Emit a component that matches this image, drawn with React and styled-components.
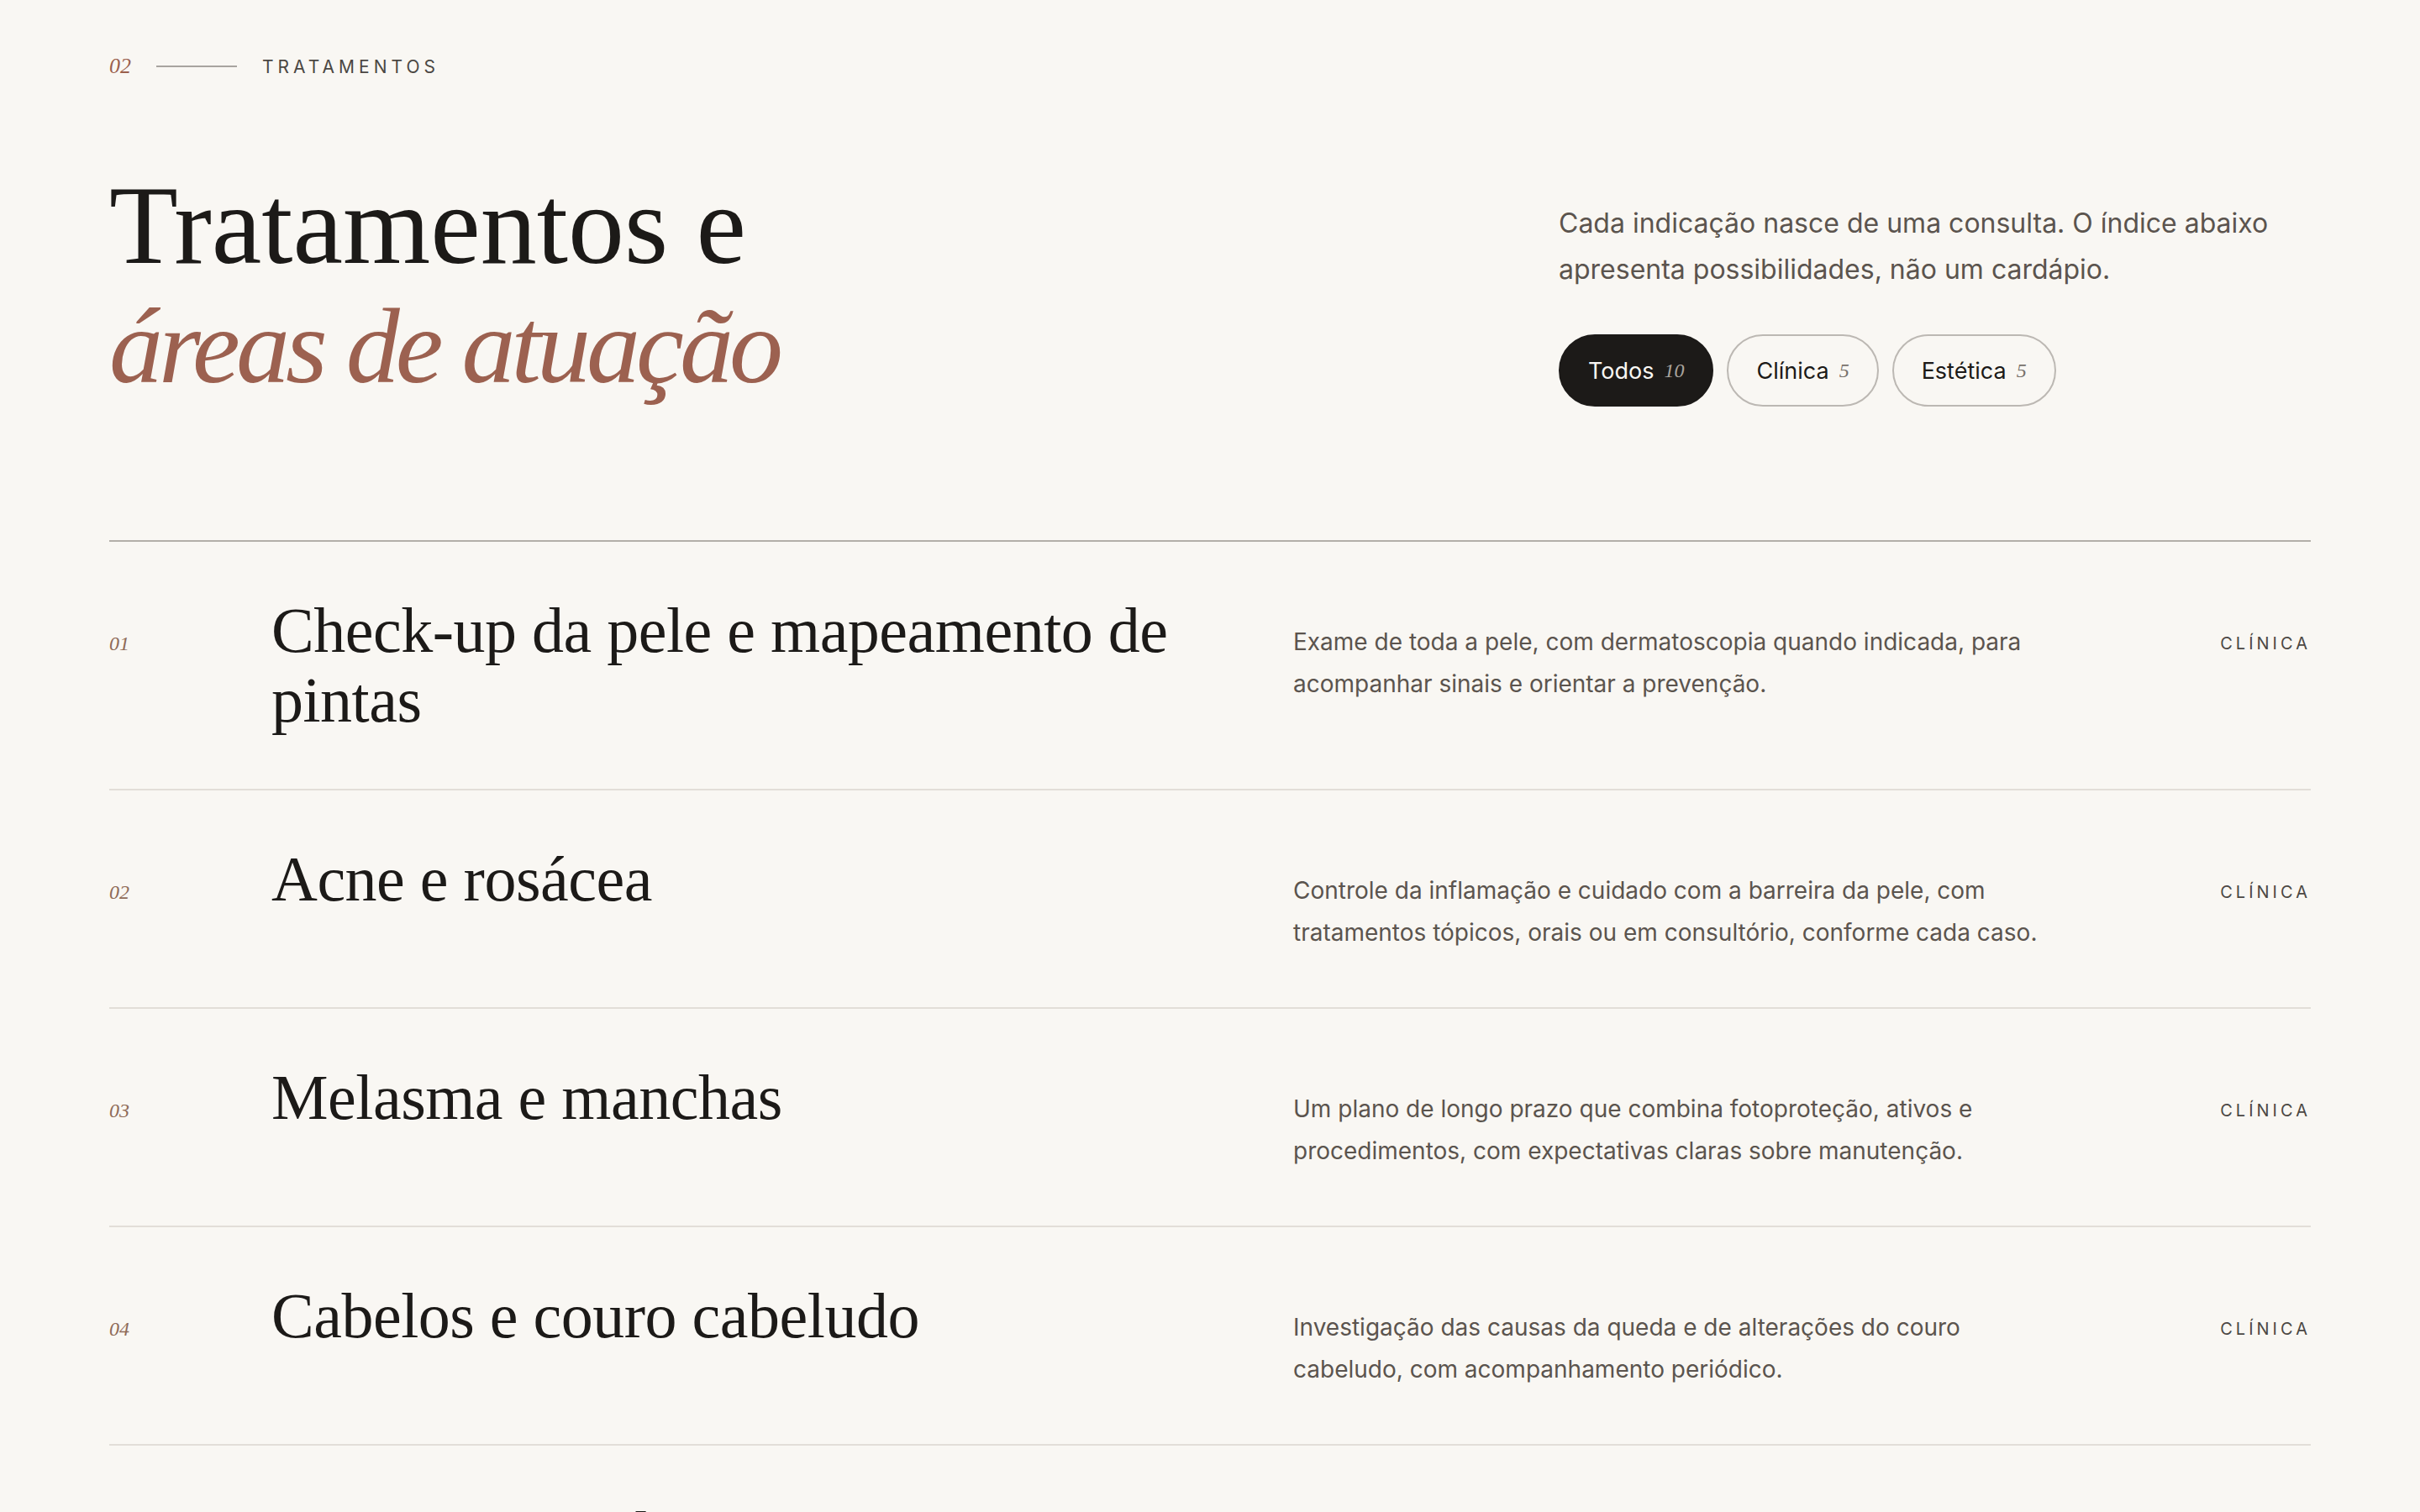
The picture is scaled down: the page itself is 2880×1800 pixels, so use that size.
import React from 'react';
import styled, { createGlobalStyle } from 'styled-components';

const serif = `"Liberation Serif", "DejaVu Serif", serif`;
const sans = `Inter, Roboto, "Liberation Sans", Arial, sans-serif`;

const GlobalStyle = createGlobalStyle`
    html, body {
        margin: 0;
        padding: 0;
        background: #f9f7f3;
    }
    * {
        box-sizing: border-box;
    }
`

const Section = styled.section`
    padding: 66px 130px 0;
    background: #f9f7f3;
    color: #1c1a18;
    font-family: ${sans};
`

const Eyebrow = styled.div`
    display: flex;
    align-items: center;
    gap: 30px;
    height: 26px;
`

const EyebrowIndex = styled.span`
    font-family: ${serif};
    font-style: italic;
    font-size: 26px;
    color: #9a5f4d;
`

const EyebrowRule = styled.span`
    width: 96px;
    height: 2px;
    background: #a8a49f;
`

const EyebrowLabel = styled.span`
    font-size: 21px;
    letter-spacing: 5px;
    color: #4b4743;
`

const Header = styled.div`
    display: grid;
    grid-template-columns: 1fr 895px;
    align-items: end;
    margin-top: 104px;
`

const Title = styled.h2`
    margin: 0;
    font-family: ${serif};
    font-weight: 400;
    font-size: 134px;
    line-height: 144px;
    color: #1c1a18;
`

const TitleLine = styled.span`
    display: block;
`

const TitleAccent = styled.span`
    display: block;
    font-style: italic;
    font-size: 128px;
    letter-spacing: -5px;
    color: #9c6150;
`

const Intro = styled.p`
    margin: 0 0 50px;
    max-width: 880px;
    font-size: 32px;
    line-height: 55px;
    color: #5b544e;
`

const Filters = styled.div`
    display: flex;
    gap: 16px;
`

const Pill = styled.button`
    display: inline-flex;
    align-items: center;
    gap: 12px;
    height: 86px;
    padding: 0 33px;
    border-radius: 43px;
    border: 2px solid ${props => props.$active ? '#1c1a18' : '#bcb8b3'};
    background: ${props => props.$active ? '#1c1a18' : 'transparent'};
    color: ${props => props.$active ? '#f9f7f3' : '#1c1a18'};
    font-family: ${sans};
    font-size: 27px;
    cursor: pointer;
`

const PillCount = styled.span`
    font-family: ${serif};
    font-style: italic;
    font-size: 24px;
    color: ${props => props.$active ? '#a9a49e' : '#77716b'};
`

const List = styled.div`
    margin-top: 159px;
    border-top: 2px solid #b3afa9;
`

const Row = styled.article`
    display: grid;
    grid-template-columns: 193px 1216px 1fr auto;
    align-items: start;
    padding: 64px 0;
    border-bottom: 2px solid #e2ded8;
`

const Index = styled.span`
    padding-top: 42px;
    font-family: ${serif};
    font-style: italic;
    font-size: 24px;
    line-height: 30px;
    color: #8f6b58;
`

const RowTitle = styled.h3`
    margin: 0;
    padding-right: 60px;
    font-family: ${serif};
    font-weight: 400;
    font-size: 76px;
    line-height: 83px;
    letter-spacing: -0.5px;
    color: #1c1a18;
`

const Description = styled.p`
    margin: 0;
    padding-top: 30px;
    max-width: 912px;
    font-size: 28px;
    line-height: 50px;
    color: #5b544e;
`

const Tag = styled.span`
    padding-top: 42px;
    font-size: 20px;
    line-height: 30px;
    letter-spacing: 4px;
    text-transform: uppercase;
    color: #4b4743;
`

const treatments = [
    { title: 'Check-up da pele e mapeamento de pintas', text: 'Exame de toda a pele, com dermatoscopia quando indicada, para acompanhar sinais e orientar a prevenção.', kind: 'Clínica' },
    { title: 'Acne e rosácea', text: 'Controle da inflamação e cuidado com a barreira da pele, com tratamentos tópicos, orais ou em consultório, conforme cada caso.', kind: 'Clínica' },
    { title: 'Melasma e manchas', text: 'Um plano de longo prazo que combina fotoproteção, ativos e procedimentos, com expectativas claras sobre manutenção.', kind: 'Clínica' },
    { title: 'Cabelos e couro cabeludo', text: 'Investigação das causas da queda e de alterações do couro cabeludo, com acompanhamento periódico.', kind: 'Clínica' },
    { title: 'Dermatites e alergias', text: 'Diagnóstico cuidadoso e rotina de cuidados para reduzir crises, coceira e irritação da pele.', kind: 'Clínica' },
    { title: 'Bioestimuladores de colágeno', text: 'Estímulo gradual da produção de colágeno para firmeza e qualidade da pele, com resultado natural.', kind: 'Estética' },
    { title: 'Toxina botulínica', text: 'Suavização de linhas de expressão preservando a naturalidade dos movimentos do rosto.', kind: 'Estética' },
    { title: 'Preenchimento com ácido hialurônico', text: 'Reposição de volume e contorno com planejamento individual e doses conservadoras.', kind: 'Estética' },
    { title: 'Lasers e tecnologias', text: 'Tratamento de textura, manchas e vasinhos com equipamentos escolhidos para cada tipo de pele.', kind: 'Estética' },
    { title: 'Peelings químicos', text: 'Renovação da superfície da pele para uniformizar o tom e melhorar a textura.', kind: 'Estética' },
];

const filters = [
    { label: 'Todos', count: 10, active: true },
    { label: 'Clínica', count: 5 },
    { label: 'Estética', count: 5 },
];

const App = () => {
    return (
        <>
            <GlobalStyle />
            <Section>
                <Eyebrow>
                    <EyebrowIndex>02</EyebrowIndex>
                    <EyebrowRule />
                    <EyebrowLabel>TRATAMENTOS</EyebrowLabel>
                </Eyebrow>
                <Header>
                    <Title>
                        <TitleLine>Tratamentos e</TitleLine>
                        <TitleAccent>áreas de atuação</TitleAccent>
                    </Title>
                    <div>
                        <Intro>Cada indicação nasce de uma consulta. O índice abaixo apresenta possibilidades, não um cardápio.</Intro>
                        <Filters>
                            {filters.map(f => (
                                <Pill key={f.label} $active={f.active}>
                                    {f.label}
                                    <PillCount $active={f.active}>{f.count}</PillCount>
                                </Pill>
                            ))}
                        </Filters>
                    </div>
                </Header>
                <List>
                    {treatments.map((t, i) => (
                        <Row key={t.title}>
                            <Index>{String(i + 1).padStart(2, '0')}</Index>
                            <RowTitle>{t.title}</RowTitle>
                            <Description>{t.text}</Description>
                            <Tag>{t.kind}</Tag>
                        </Row>
                    ))}
                </List>
            </Section>
        </>
    );
};

export default App;
